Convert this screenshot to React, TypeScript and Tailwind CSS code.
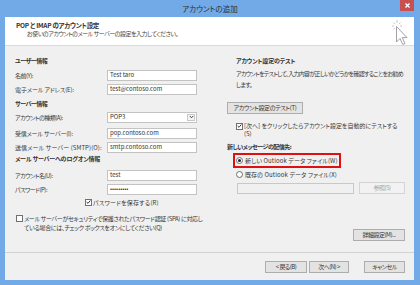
import React from "react";

const Checkbox = ({ checked }: { checked?: boolean }) => (
  <span className="w-[7px] h-[7px] border border-[#707070] bg-white flex items-center justify-center shrink-0">
    {checked && (
      <svg width="6" height="6" viewBox="0 0 6 6">
        <path d="M0.8 3 L2.4 4.6 L5.2 1.2" fill="none" stroke="#222" strokeWidth="1.1" />
      </svg>
    )}
  </span>
);

const Radio = ({ checked }: { checked?: boolean }) => (
  <span className="w-[7px] h-[7px] rounded-full border border-[#707070] bg-white flex items-center justify-center shrink-0">
    {checked && <span className="w-[3px] h-[3px] rounded-full bg-[#222]" />}
  </span>
);

const Input = ({ value, w = "w-[90px]" }: { value?: string; w?: string }) => (
  <div className={`${w} h-[11px] border border-[#c3c3c3] bg-white flex items-center pl-[2px] text-[#333] leading-none tracking-[0px] whitespace-nowrap`}>
    {value}
  </div>
);

const Row = ({ label, children, mt, t = "" }: { label: string; children: React.ReactNode; mt: string; t?: string }) => (
  <div className={`flex items-center h-[12px] ${mt}`}>
    <div className={`w-[92px] shrink-0 whitespace-nowrap ${t}`}>{label}</div>
    {children}
  </div>
);

const Btn = ({ children, cls = "" }: { children: React.ReactNode; cls?: string }) => (
  <div className={`h-[12px] border border-[#adadad] bg-[#e3e3e3] flex items-center justify-center text-[#333] leading-none whitespace-nowrap ${cls}`}>
    {children}
  </div>
);

export default function App() {
  return (
    <div className="w-[420px] h-[285px] bg-[#72aae8] flex flex-col relative overflow-hidden text-[6px] tracking-[-0.5px] text-[#383838] [font-family:'Noto_Sans_CJK_JP','Noto_Sans',sans-serif] [font-feature-settings:'palt']">
      {/* title bar */}
      <div className="h-[17px] shrink-0 flex items-center justify-center text-[#2e2e2e] text-[7.5px] tracking-[0px] relative">
        アカウントの追加
        <div className="absolute right-[6px] top-0 w-[14px] h-[11px] bg-[#c75050] flex items-center justify-center">
          <svg width="5" height="5" viewBox="0 0 5 5">
            <path d="M0.5 0.5 L4.5 4.5 M4.5 0.5 L0.5 4.5" stroke="#fff" strokeWidth="1.3" />
          </svg>
        </div>
      </div>

      <div className="flex-1 ml-[5px] mr-[6px] mb-[5px] bg-[#f0f0f0] flex flex-col">
        {/* header */}
        <div className="h-[29px] shrink-0 bg-white border-b border-[#dadada] pt-[3px]">
          <div className="h-[10px] leading-[10px] pl-[11px] font-bold text-[#333] text-[6.5px] tracking-[-0.3px]">POP と IMAP のアカウント設定</div>
          <div className="h-[8px] leading-[8px] pl-[22px] text-[#444]">お使いのアカウントのメール サーバーの設定を入力してください。</div>
        </div>

        {/* body */}
        <div className="h-[206px] shrink-0 flex">
          {/* left column */}
          <div className="w-[222px] shrink-0 pl-[10px] flex flex-col">
            <div className="mt-[10px] h-[10px] leading-[10px] font-bold text-[#333]">ユーザー情報</div>
            <Row label="名前(Y):" mt="mt-[3px]"><Input value="Test taro" /></Row>
            <Row label="電子メール アドレス(E):" mt="mt-[2px]" t="tracking-[-0.1px]"><Input value="test@contoso.com" /></Row>
            <div className="mt-[4px] h-[10px] leading-[10px] font-bold text-[#333]">サーバー情報</div>
            <Row label="アカウントの種類(A):" mt="mt-[2px]">
              <div className="w-[90px] h-[11px] border border-[#c3c3c3] bg-white flex items-center pl-[2px] text-[#333] leading-none tracking-[0px] relative">
                POP3
                <div className="absolute right-[1px] top-[1px] w-[8px] h-[7px] border border-[#c8c8c8] bg-[#f4f4f4] flex items-center justify-center">
                  <svg width="5" height="4" viewBox="0 0 5 4">
                    <path d="M0.8 1 L2.5 2.8 L4.2 1" fill="none" stroke="#444" strokeWidth="1" />
                  </svg>
                </div>
              </div>
            </Row>
            <Row label="受信メール サーバー(I):" mt="mt-[4px]" t="tracking-[-0.2px]"><Input value="pop.contoso.com" /></Row>
            <Row label="送信メール サーバー (SMTP)(O):" mt="mt-[2px]" t="tracking-[0.1px]"><Input value="smtp.contoso.com" /></Row>
            <div className="mt-[1px] h-[10px] leading-[10px] font-bold text-[#333] tracking-[-0.2px]">メール サーバーへのログオン情報</div>
            <Row label="アカウント名(U):" mt="mt-[5px]"><Input value="test" /></Row>
            <Row label="パスワード(P):" mt="mt-[2px]">
              <Input value="•••••••••" />
            </Row>
            <div className="mt-[2px] h-[10px] flex items-center gap-[1px] pl-[70px] whitespace-nowrap tracking-[0.2px]">
              <Checkbox checked />
              <span>パスワードを保存する(R)</span>
            </div>
            <div className="mt-[7px] flex items-start gap-[1px] pl-[1px] leading-[9px] whitespace-nowrap tracking-[-0.35px]">
              <span className="mt-[1px]"><Checkbox /></span>
              <span>
                メール サーバーがセキュリティで保護されたパスワード認証 (SPA) に対応し
                <br />
                ている場合には、チェック ボックスをオンにしてください(Q)
              </span>
            </div>
          </div>

          {/* right column */}
          <div className="w-[178px] shrink-0 flex flex-col">
            <div className="mt-[10px] h-[10px] leading-[10px] pl-[9px] font-bold text-[#333] tracking-[-0.2px]">アカウント設定のテスト</div>
            <div className="mt-[2px] pl-[9px] leading-[11px] whitespace-nowrap tracking-[-0.7px]">
              アカウントをテストして、入力内容が正しいかどうかを確認することをお勧め
              <br />
              します。
            </div>
            <Btn cls="mt-[12px] w-[76px] tracking-[-0.3px]">アカウント設定のテスト(T)</Btn>
            <div className="mt-[8px] pl-[9px] flex items-start gap-[1px] leading-[8px] whitespace-nowrap tracking-[0px]">
              <span className="mt-[0.5px]"><Checkbox checked /></span>
              <span>
                [次へ] をクリックしたらアカウント設定を自動的にテストする
                <br />
                (S)
              </span>
            </div>
            <div className="mt-[4px] h-[10px] leading-[10px] font-bold text-[#333]">新しいメッセージの配信先:</div>
            <div className="mt-[1px] ml-[6px] w-[108px] h-[15px] border-2 border-[#e01010] flex items-center gap-[2px] pl-[1px] whitespace-nowrap tracking-[0.1px]">
              <Radio checked />
              <span>新しい Outlook データ ファイル(W)</span>
            </div>
            <div className="mt-[1px] ml-[9px] h-[10px] flex items-center gap-[2px] whitespace-nowrap tracking-[0.1px]">
              <Radio />
              <span>既存の Outlook データ ファイル(X)</span>
            </div>
            <div className="mt-[3px] flex items-center gap-[5px] ml-[10px]">
              <div className="w-[117px] h-[11px] border border-[#c8c8c8] bg-[#f0f0f0]" />
              <div className="w-[46px] h-[12px] border border-[#d4d4d4] bg-[#f2f2f2] flex items-center justify-center text-[#a4a4a4] leading-none">
                参照(S)
              </div>
            </div>
            <div className="mt-auto mb-[11px] flex justify-end">
              <Btn cls="w-[52px]">詳細設定(M)...</Btn>
            </div>
          </div>
        </div>

        {/* separator */}
        <div className="h-[1px] shrink-0 bg-[#d2d2d2]" />

        {/* footer */}
        <div className="flex-1 flex justify-end items-start pt-[8px] pr-[9px]">
          <Btn cls="w-[42px]">&lt; 戻る(B)</Btn>
          <Btn cls="w-[40px] ml-[2px] border-[#5a9ad8]">次へ(N) &gt;</Btn>
          <Btn cls="w-[41px] ml-[15px]">キャンセル</Btn>
        </div>
      </div>

      {/* mouse cursor overlay */}
      <svg className="absolute left-[390px] top-[19px]" width="20" height="28" viewBox="0 0 20 28">
        <g stroke="#b8b8b8" strokeWidth="0.8">
          <path d="M7 1 L7 4 M7 10 L7 12 M2 7 L4 7 M10 7 L12 7 M3.5 3.5 L5 5 M10.5 3.5 L9 5 M3.5 10.5 L5 9" />
        </g>
        <path d="M6.5 7.5 L6.5 23 L10 19.5 L12.8 25.5 L15 24.5 L12.3 18.6 L17 18.6 Z" fill="#fff" stroke="#8a8a8a" strokeWidth="0.8" strokeLinejoin="round" />
      </svg>
    </div>
  );
}
